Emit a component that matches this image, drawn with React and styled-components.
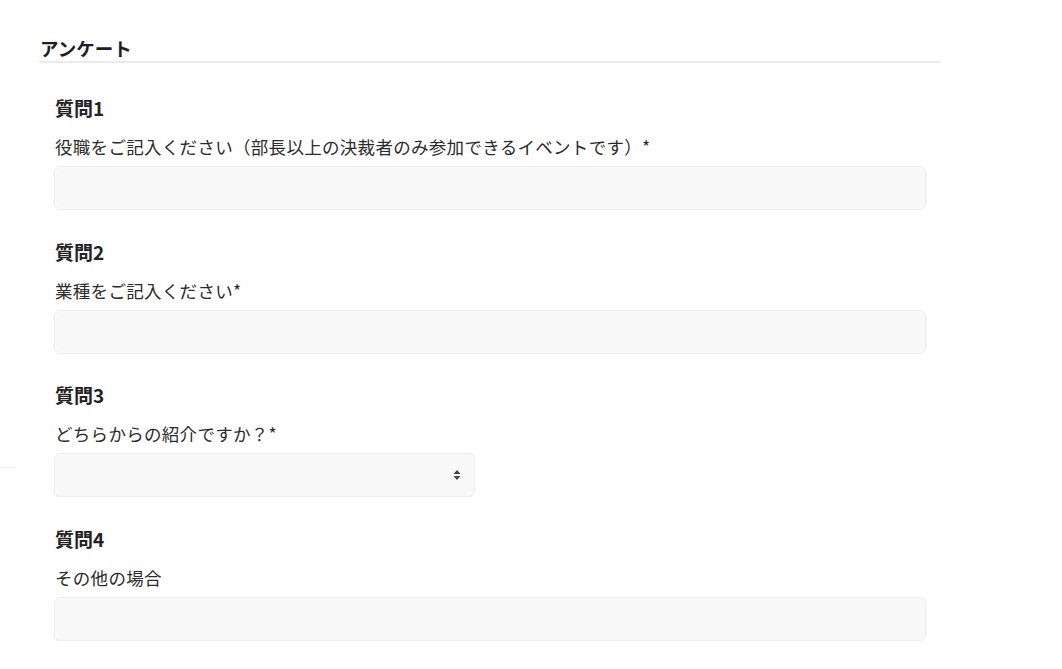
import React from "react";
import styled, { createGlobalStyle } from "styled-components";

const Global = createGlobalStyle`
  html, body { margin: 0; padding: 0; background: #fff; }
  body { font-family: "Noto Sans CJK JP", "Noto Sans", sans-serif; color: #222; }
  * { box-sizing: border-box; }
`;

const Page = styled.div`
  position: relative;
  width: 1062px;
  min-height: 669px;
  padding: 35px 0 0 39px;
`;

const Stray = styled.div`
  position: absolute;
  left: 0;
  top: 467px;
  width: 16px;
  height: 1px;
  background: #ececec;
`;

const Section = styled.section`
  width: 902px;
`;

const Heading = styled.h2`
  margin: 0;
  padding-left: 1px;
  font-size: 18.5px;
  font-weight: 700;
  line-height: 26px;
  color: #1e1e1e;
  border-bottom: 2px solid #ebebeb;
`;

const Questions = styled.div`
  display: flex;
  flex-direction: column;
  gap: 29.5px;
  padding: 33px 15px 0 15px;
`;

const Question = styled.div`
  display: flex;
  flex-direction: column;
`;

const Title = styled.div`
  font-size: 19px;
  font-weight: 700;
  line-height: 24px;
  color: #222;
  padding-left: 1px;
`;

const Label = styled.label`
  margin-top: 15px;
  font-size: 17.5px;
  letter-spacing: 0.3px;
  line-height: 24px;
  color: #2b2b2b;
  padding-left: 1px;
`;

const Field = styled.div`
  margin-top: 7px;
  position: relative;
  width: ${(p) => (p.$narrow ? "421px" : "100%")};
  height: 44px;
  background: #f9f9f9;
  border: 1px solid #ededed;
  border-radius: 6px;
`;

const Input = styled.input`
  width: 100%;
  height: 100%;
  border: none;
  background: transparent;
  outline: none;
  padding: 0 12px;
  font: inherit;
  font-size: 16px;
`;

const Arrows = styled.svg`
  position: absolute;
  right: 13px;
  top: 50%;
  transform: translateY(-50%);
`;

const questions = [
  { title: "質問1", label: "役職をご記入ください（部長以上の決裁者のみ参加できるイベントです）*" },
  { title: "質問2", label: "業種をご記入ください*" },
  { title: "質問3", label: "どちらからの紹介ですか？*", select: true },
  { title: "質問4", label: "その他の場合" },
];

export default function App() {
  return (
    <>
      <Global />
      <Page>
        <Stray />
        <Section>
          <Heading>アンケート</Heading>
          <Questions>
            {questions.map((q) => (
              <Question key={q.title}>
                <Title>{q.title}</Title>
                <Label>{q.label}</Label>
                <Field $narrow={q.select}>
                  {q.select ? (
                    <Arrows width="8" height="11" viewBox="0 0 8 11">
                      <path d="M4 0.5 L7.5 4.5 H0.5 Z" fill="#444" />
                      <path d="M4 10.5 L7.5 6.5 H0.5 Z" fill="#444" />
                    </Arrows>
                  ) : (
                    <Input />
                  )}
                </Field>
              </Question>
            ))}
          </Questions>
        </Section>
      </Page>
    </>
  );
}
